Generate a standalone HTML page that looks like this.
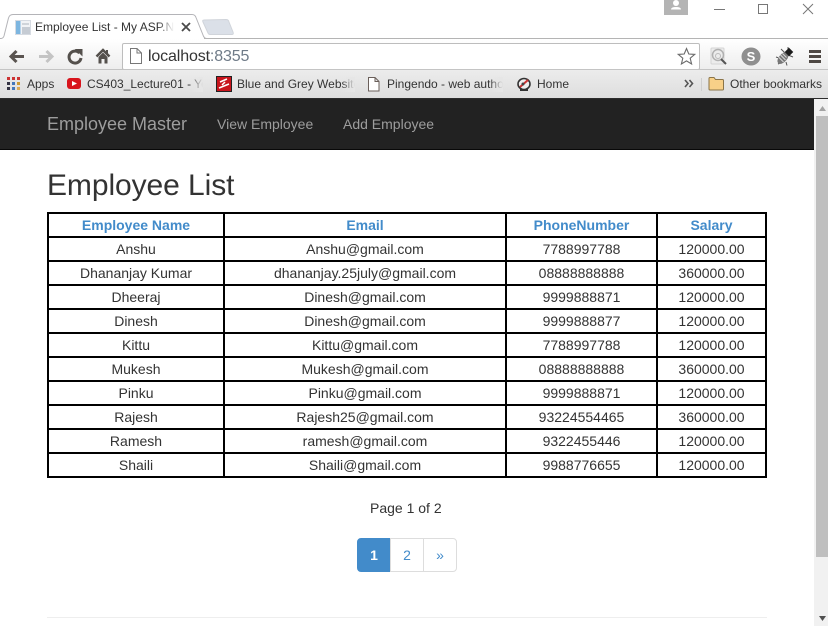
<!DOCTYPE html>
<html><head><meta charset="utf-8"><title>Employee List</title>
<style>
html,body{margin:0;padding:0;background:#fff;}
body{width:828px;height:626px;overflow:hidden;position:relative;font-family:"Liberation Sans",sans-serif;color:#333;font-size:14px;}
.a{position:absolute;white-space:nowrap;}
#toolbar{position:absolute;left:0;top:39px;width:828px;height:31px;background:linear-gradient(#fff,#ededed);}
#bm{position:absolute;left:0;top:69px;width:828px;height:29px;background:linear-gradient(#ececec,#dedede);border-top:1px solid #c4c4c4;box-sizing:border-box;}
#topline{position:absolute;left:204px;top:38px;width:624px;height:1px;background:#b4b4b4;}
#omni{position:absolute;left:122px;top:43px;width:576px;height:25px;background:#fff;border:1px solid #bdbdbd;border-radius:2px;}
.bt{font-size:12px;color:#333;top:77px;line-height:14px;}
.fade{overflow:hidden;}
.fade:after{content:"";position:absolute;right:0;top:0;width:14px;height:100%;background:linear-gradient(90deg,rgba(230,230,230,0),#e6e6e6);}
#nav{position:absolute;left:0;top:99px;width:814px;height:51px;background:#222;border-bottom:1px solid #080808;box-sizing:border-box;}
#nav span{position:absolute;white-space:nowrap;color:#9d9d9d;}
h1{position:absolute;left:47px;top:168px;margin:0;font-size:30px;font-weight:500;line-height:36px;color:#333;letter-spacing:-.08px;}
table{position:absolute;left:47px;top:212px;width:718px;border-collapse:collapse;table-layout:fixed;}
td,th{border:2px solid #000;padding:0;height:22px;line-height:20px;text-align:center;font-size:14px;font-weight:normal;color:#333;box-sizing:content-box;}
th{font-weight:bold;color:#428bca;}
#pg{position:absolute;left:357px;top:538px;height:34px;display:flex;font-size:14px;}
#pg div{width:32px;height:32px;line-height:32px;text-align:center;border:1px solid #ddd;color:#428bca;margin-left:-1px;background:#fff;}
#sb{position:absolute;left:814px;top:99px;width:14px;height:527px;background:#f1f1f1;}
</style></head><body>

<!-- tab strip -->
<svg class="a" style="left:0;top:0" width="240" height="40">
<path d="M204 20 Q202 20 203 22 L208 33 Q208.500 34.500 210 34.500 L232 34.500 Q234 34.500 233 32 L229 22 Q228.500 19.500 226 19.500 Z" fill="#dbe0e8" stroke="#d0d4da"/>
<path d="M0 38.500 L1 38.500 Q3 38.500 4 36 L8.500 18 Q9.500 14.500 13 14.500 L192 14.500 Q195 14.500 196 17.500 L203 35 Q204 38.500 207 38.500 L240 38.500" fill="#fff" stroke="#b4b4b8"/>
</svg>
<div id="topline"></div>
<svg class="a" style="left:15px;top:20px" width="17" height="16"><rect x=".5" y=".5" width="15" height="14" fill="#f1f3f6" stroke="#d6dbe2"/><rect x="1" y="1" width="4.500" height="13" fill="#7db6e0"/><rect x="7" y="3" width="7" height="2" fill="#cfd4da"/><rect x="7" y="7" width="8" height="7" fill="#c6ccd4"/></svg>
<div class="a" style="left:35px;top:20px;width:139px;font-size:12px;line-height:14px;color:#333;height:16px;overflow:hidden">Employee List - My ASP.NET Application<span style="position:absolute;right:0;top:0;width:16px;height:16px;background:linear-gradient(90deg,rgba(255,255,255,0),#fff)"></span></div>
<svg class="a" style="left:181px;top:22px" width="10" height="10"><path d="M1 1 L9 9 M9 1 L1 9" stroke="#4a4a4a" stroke-width="1.800"/></svg>

<!-- window controls -->
<div class="a" style="left:664px;top:0;width:24px;height:15px;background:#b4b4b4"></div>
<svg class="a" style="left:664px;top:0" width="24" height="15"><circle cx="12" cy="3" r="3" fill="#fff"/><path d="M7 9.500 Q7 7 12 7 Q17 7 17 9.500 Z" fill="#fff"/></svg>
<svg class="a" style="left:710px;top:0" width="118" height="18"><path d="M4 9.500 H15" stroke="#777"/><rect x="48.500" y="4.500" width="9" height="9" fill="none" stroke="#777"/><path d="M93 4 L103 14 M103 4 L93 14" stroke="#777"/></svg>

<div id="toolbar"></div>
<div id="topline"></div>

<!-- nav icons -->
<svg class="a" style="left:8px;top:47px" width="110" height="20">
<path d="M16 9.500 H3 M8.500 4 L3 9.500 L8.500 15" fill="none" stroke="#5a5450" stroke-width="3"/>
<path d="M31 9.500 H44 M38.500 4 L44 9.500 L38.500 15" fill="none" stroke="#c4c4c4" stroke-width="3"/>
<path d="M71.500 6 A6 6 0 1 0 73 11" fill="none" stroke="#54504c" stroke-width="3"/><path d="M67 2 H74.500 V9.500 Z" fill="#54504c"/>
<path d="M88.500 9.500 L95 3 L101.500 9.500" fill="none" stroke="#54504c" stroke-width="2.500"/><path d="M90.500 10 L95 5.500 L99.500 10 V16.500 H96.500 V12 H93.500 V16.500 H90.500 Z" fill="#54504c"/><rect x="98" y="3" width="2" height="4" fill="#54504c"/>
</svg>

<div id="omni"></div>
<svg class="a" style="left:129px;top:48px" width="14" height="16"><path d="M1.500 .5 H8 L12.500 5 V15.500 H1.500 Z M8 .5 V5 H12.500" fill="#fff" stroke="#777"/></svg>
<div class="a" style="left:148px;top:47px;font-size:16px;line-height:19px;color:#333;letter-spacing:-.14px">localhost<span style="color:#6f7b88">:8355</span></div>
<svg class="a" style="left:677px;top:47px" width="19" height="19"><path d="M9.500 1.500 L11.800 7 L17.700 7.400 L13.200 11.200 L14.600 17 L9.500 13.900 L4.400 17 L5.800 11.200 L1.300 7.400 L7.200 7 Z" fill="#fff" stroke="#6a6a6a" stroke-width="1.100"/></svg>

<!-- extensions -->
<svg class="a" style="left:710px;top:47px" width="18" height="19"><rect x="1" y="1" width="13" height="16" rx="1" fill="#ececec" stroke="#d4d4d4"/><circle cx="8" cy="8" r="5.500" fill="none" stroke="#b0b0b0" stroke-width="1.500"/><circle cx="8" cy="9" r="2.500" fill="none" stroke="#bbb"/><path d="M11 12 L16 17" stroke="#555" stroke-width="2"/></svg>
<svg class="a" style="left:741px;top:47px" width="20" height="19"><ellipse cx="10" cy="9.500" rx="9.500" ry="9" fill="#8f8f8f"/><text x="10" y="14" text-anchor="middle" font-family="Liberation Sans" font-weight="bold" font-size="13" fill="#fff">S</text></svg>
<svg class="a" style="left:773px;top:46px" width="22" height="20">
<path d="M9 13 L3 11 M11 15 L5 18 M13 16 L14 19.500 M12 7 L8 3 M15 9 L20 11 M15 6 L15 1" stroke="#555" stroke-width="1" fill="none"/>
<ellipse cx="10" cy="12" rx="4" ry="7" transform="rotate(42 10 12)" fill="#777"/>
<path d="M5.500 11 L10.500 16 M7.500 9 L12.500 14 M9.500 7.500 L13.500 11.500" stroke="#d8d8d8"/>
<rect x="13" y="3" width="6" height="6" transform="rotate(45 16 6)" fill="#1c1c1c"/>
</svg>
<svg class="a" style="left:808px;top:49px" width="14" height="15"><path d="M1 1h12v3H1zM1 6h12v3H1zM1 11h12v3H1z" fill="#4e4844"/></svg>

<!-- bookmarks -->
<div id="bm"></div>
<div class="a" style="left:0;top:98px;width:828px;height:1px;background:#2c2c2c"></div>
<svg class="a" style="left:7px;top:77px" width="14" height="14"><g><rect x="0" y="0" width="3" height="3" fill="#c33"/><rect x="5" y="0" width="3" height="3" fill="#c33"/><rect x="10" y="0" width="3" height="3" fill="#c33"/><rect x="0" y="5" width="3" height="3" fill="#334"/><rect x="5" y="5" width="3" height="3" fill="#47b"/><rect x="10" y="5" width="3" height="3" fill="#c93"/><rect x="0" y="10" width="3" height="3" fill="#334"/><rect x="5" y="10" width="3" height="3" fill="#47b"/><rect x="10" y="10" width="3" height="3" fill="#da5"/></g></svg>
<div class="a bt" style="left:27px">Apps</div>
<svg class="a" style="left:67px;top:78px" width="14" height="11"><rect x="0" y="0" width="14" height="11" rx="3" fill="#d8141c"/><path d="M5 3 L10 5.500 L5 8 Z" fill="#fff"/></svg>
<div class="a bt fade" style="left:87px;width:116px;height:15px">CS403_Lecture01 - YouTube</div>
<svg class="a" style="left:216px;top:76px" width="16" height="16"><rect x=".5" y=".5" width="15" height="15" fill="#c8141c" stroke="#222"/><path d="M4 6 L11 3 M9 6 L6 9 M3 12 L13 8" fill="none" stroke="#fff" stroke-width="1.500"/></svg>
<div class="a bt fade" style="left:237px;width:118px;height:15px">Blue and Grey Website Template</div>
<svg class="a" style="left:368px;top:77px" width="12" height="15"><path d="M.5 .5 H7 L11 4.500 V14 H.5 Z M7 .5 V4.500 H11" fill="#fff" stroke="#6a5f5a"/></svg>
<div class="a bt fade" style="left:387px;width:116px;height:15px">Pingendo - web authoring tool</div>
<svg class="a" style="left:516px;top:77px" width="16" height="15"><ellipse cx="8" cy="7" rx="6" ry="5.500" fill="#eee" stroke="#333" stroke-width="1.600"/><path d="M4 10 L12 3" stroke="#c33" stroke-width="2"/><circle cx="7" cy="7" r="1.500" fill="#444"/><rect x="4" y="12" width="8" height="2" fill="#333"/></svg>
<div class="a bt" style="left:537px">Home</div>
<svg class="a" style="left:684px;top:79px" width="10" height="9"><path d="M1 1 L4 4.500 L1 8 M5.500 1 L8.500 4.500 L5.500 8" fill="none" stroke="#555" stroke-width="1.600"/></svg>
<div class="a" style="left:701px;top:78px;width:1px;height:13px;background:#cfcfcf"></div>
<svg class="a" style="left:708px;top:76px" width="17" height="15"><path d="M1 13 V2.500 Q1 1.500 2 1.500 H6 L7.500 3.500 H14.500 Q15.500 3.500 15.500 4.500 V13 Q15.500 14 14.500 14 H2 Q1 14 1 13 Z" fill="#f8d088" stroke="#8a7448"/></svg>
<div class="a bt" style="left:730px">Other bookmarks</div>

<!-- navbar -->
<div id="nav">
<span style="left:47px;top:15px;font-size:18px;line-height:20px">Employee Master</span>
<span style="left:217px;top:15px;line-height:20px">View Employee</span>
<span style="left:343px;top:15px;line-height:20px">Add Employee</span>
</div>

<h1>Employee List</h1>

<table>
<colgroup><col style="width:176px"><col style="width:282px"><col style="width:151px"><col style="width:109px"></colgroup>
<tr><th>Employee Name</th><th>Email</th><th>PhoneNumber</th><th>Salary</th></tr>
<tr><td>Anshu</td><td>Anshu@gmail.com</td><td>7788997788</td><td>120000.00</td></tr>
<tr><td>Dhananjay Kumar</td><td>dhananjay.25july@gmail.com</td><td>08888888888</td><td>360000.00</td></tr>
<tr><td>Dheeraj</td><td>Dinesh@gmail.com</td><td>9999888871</td><td>120000.00</td></tr>
<tr><td>Dinesh</td><td>Dinesh@gmail.com</td><td>9999888877</td><td>120000.00</td></tr>
<tr><td>Kittu</td><td>Kittu@gmail.com</td><td>7788997788</td><td>120000.00</td></tr>
<tr><td>Mukesh</td><td>Mukesh@gmail.com</td><td>08888888888</td><td>360000.00</td></tr>
<tr><td>Pinku</td><td>Pinku@gmail.com</td><td>9999888871</td><td>120000.00</td></tr>
<tr><td>Rajesh</td><td>Rajesh25@gmail.com</td><td>93224554465</td><td>360000.00</td></tr>
<tr><td>Ramesh</td><td>ramesh@gmail.com</td><td>9322455446</td><td>120000.00</td></tr>
<tr><td>Shaili</td><td>Shaili@gmail.com</td><td>9988776655</td><td>120000.00</td></tr>
</table>

<div class="a" style="left:370px;top:498px;line-height:20px">Page 1 of 2</div>

<div id="pg">
<div style="margin-left:0;background:#428bca;border-color:#428bca;color:#fff;font-weight:bold;border-radius:4px 0 0 4px">1</div>
<div>2</div>
<div style="border-radius:0 4px 4px 0">»</div>
</div>

<div class="a" style="left:47px;top:617px;width:720px;height:1px;background:#eee"></div>

<!-- scrollbar -->
<div id="sb"></div>
<div class="a" style="left:816px;top:116px;width:12px;height:441px;background:#bfbfbf"></div>
<svg class="a" style="left:816px;top:103px" width="12" height="520"><path d="M3 8 L6.500 3 L10 8 Z" fill="#a3a3a3"/><path d="M3 513 H10 L6.500 518 Z" fill="#505050"/></svg>
</body></html>
